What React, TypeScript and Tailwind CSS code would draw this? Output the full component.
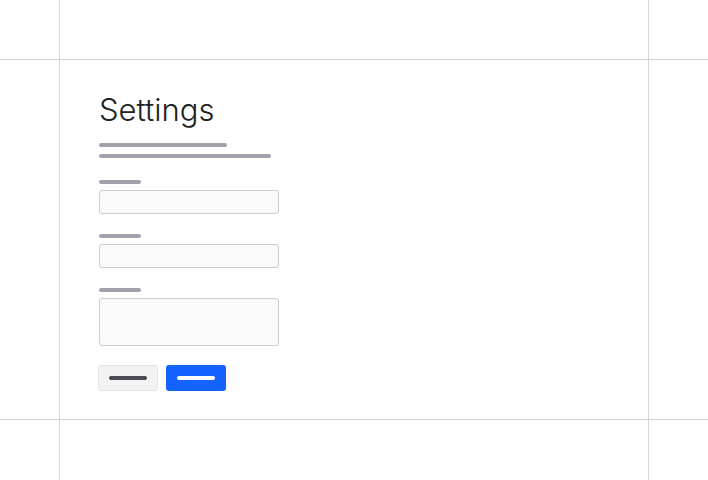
export default function App() {
  const fields = [
    { id: 'name', tall: false },
    { id: 'email', tall: false },
    { id: 'bio', tall: true },
  ];

  return (
    <div className="grid h-[480px] w-[708px] grid-cols-[59px_590px_59px] grid-rows-[59px_361px_60px] bg-white font-['Inter',sans-serif]">
      <div />
      <div className="border-x border-[#d4d4d4]" />
      <div />

      <div className="border-y border-[#d4d4d4]" />
      <div className="border border-[#d4d4d4] px-[39px] pt-[30px]">
        <h1 className="text-[31px] font-light leading-[40px] text-[#222222]">Settings</h1>
        <div className="mt-[13px] h-[4px] w-[128px] rounded-full bg-[#a1a1aa]" />
        <div className="mt-[7px] h-[4px] w-[172px] rounded-full bg-[#a1a1aa]" />

        <form className="mt-[22px] flex flex-col gap-[20px]">
          {fields.map((f) => (
            <div key={f.id} className="flex flex-col gap-[6px]">
              <div className="h-[4px] w-[42px] rounded-full bg-[#a1a1aa]" />
              {f.tall ? (
                <textarea className="h-[48px] w-[180px] resize-none rounded-[3px] border border-[#cccccc] bg-[#fafafa]" />
              ) : (
                <input className="h-[24px] w-[180px] rounded-[3px] border border-[#cccccc] bg-[#fafafa]" />
              )}
            </div>
          ))}
        </form>

        <div className="ml-[-1px] mt-[19px] flex gap-[8px]">
          <button className="flex h-[26px] w-[60px] items-center justify-center rounded-[3px] border border-[#e4e4e4] bg-[#f3f3f3]">
            <span className="h-[4px] w-[38px] rounded-full bg-[#4a4a52]" />
          </button>
          <button className="flex h-[26px] w-[60px] items-center justify-center rounded-[3px] bg-[#1463ff]">
            <span className="h-[4px] w-[38px] rounded-full bg-white" />
          </button>
        </div>
      </div>
      <div className="border-y border-[#d4d4d4]" />

      <div />
      <div className="border-x border-[#d4d4d4]" />
      <div />
    </div>
  );
}
